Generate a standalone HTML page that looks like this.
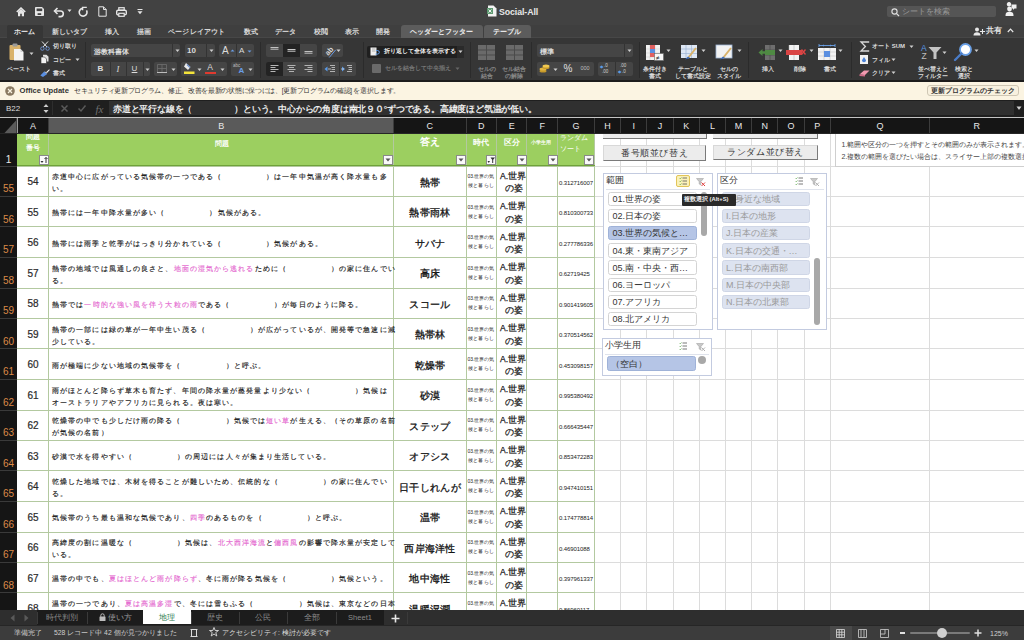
<!DOCTYPE html><html><head><meta charset="utf-8"><style>
@font-face{font-family:"CJB";src:local("Liberation Sans");size-adjust:125%;unicode-range:U+2E80-2FFF,U+3001-33FF,U+3400-9FFF,U+F900-FAFF,U+FF01-FFEF}
@font-face{font-family:"CJB";font-weight:bold;src:local("Liberation Sans Bold"),local("LiberationSans-Bold");size-adjust:125%;unicode-range:U+2E80-2FFF,U+3001-33FF,U+3400-9FFF,U+F900-FAFF,U+FF01-FFEF}
*{margin:0;padding:0;box-sizing:border-box}
html,body{width:1024px;height:640px;overflow:hidden;background:#2c2c2c;font-family:"CJB","Liberation Sans",sans-serif}
div{position:absolute}
.j{text-align:justify;text-align-last:justify}
.bl{display:inline-block;height:1px}
.t{white-space:nowrap;transform:translateY(-50%);line-height:1}
.tc{white-space:nowrap;transform:translate(-50%,-50%);line-height:1}
.tr{white-space:nowrap;transform:translate(-100%,-50%);line-height:1}
svg{position:absolute;overflow:visible}
.cj{font-family:"CJB","Liberation Sans",sans-serif}
</style></head><body><div style="left:0px;top:134px;width:1024px;height:476px;background:#ffffff"></div>
<div style="left:620px;top:134px;width:1px;height:476px;background:#dcdcdc"></div>
<div style="left:646px;top:134px;width:1px;height:476px;background:#dcdcdc"></div>
<div style="left:673px;top:134px;width:1px;height:476px;background:#dcdcdc"></div>
<div style="left:699px;top:134px;width:1px;height:476px;background:#dcdcdc"></div>
<div style="left:725px;top:134px;width:1px;height:476px;background:#dcdcdc"></div>
<div style="left:751px;top:134px;width:1px;height:476px;background:#dcdcdc"></div>
<div style="left:777px;top:134px;width:1px;height:476px;background:#dcdcdc"></div>
<div style="left:804px;top:134px;width:1px;height:476px;background:#dcdcdc"></div>
<div style="left:830px;top:134px;width:1px;height:476px;background:#dcdcdc"></div>
<div style="left:929px;top:134px;width:1px;height:476px;background:#dcdcdc"></div>
<div style="left:594px;top:166px;width:430px;height:1px;background:#dcdcdc"></div>
<div style="left:594px;top:196px;width:430px;height:1px;background:#dcdcdc"></div>
<div style="left:594px;top:226px;width:430px;height:1px;background:#dcdcdc"></div>
<div style="left:594px;top:257px;width:430px;height:1px;background:#dcdcdc"></div>
<div style="left:594px;top:288px;width:430px;height:1px;background:#dcdcdc"></div>
<div style="left:594px;top:318px;width:430px;height:1px;background:#dcdcdc"></div>
<div style="left:594px;top:348px;width:430px;height:1px;background:#dcdcdc"></div>
<div style="left:594px;top:379px;width:430px;height:1px;background:#dcdcdc"></div>
<div style="left:594px;top:410px;width:430px;height:1px;background:#dcdcdc"></div>
<div style="left:594px;top:440px;width:430px;height:1px;background:#dcdcdc"></div>
<div style="left:594px;top:470px;width:430px;height:1px;background:#dcdcdc"></div>
<div style="left:594px;top:501px;width:430px;height:1px;background:#dcdcdc"></div>
<div style="left:594px;top:532px;width:430px;height:1px;background:#dcdcdc"></div>
<div style="left:594px;top:562px;width:430px;height:1px;background:#dcdcdc"></div>
<div style="left:594px;top:592px;width:430px;height:1px;background:#dcdcdc"></div>
<div style="left:17px;top:134px;width:577.5px;height:32px;background:#9ccf60"></div>
<div style="left:48px;top:134px;width:1px;height:476px;background:#b3c9a0"></div>
<div style="left:393px;top:134px;width:1px;height:476px;background:#b3c9a0"></div>
<div style="left:466px;top:134px;width:1px;height:476px;background:#b3c9a0"></div>
<div style="left:496px;top:134px;width:1px;height:476px;background:#b3c9a0"></div>
<div style="left:526px;top:134px;width:1px;height:476px;background:#b3c9a0"></div>
<div style="left:557px;top:134px;width:1px;height:476px;background:#b3c9a0"></div>
<div style="left:594px;top:134px;width:1px;height:476px;background:#b3c9a0"></div>
<div style="left:17px;top:166px;width:577.5px;height:1px;background:#b3c9a0"></div>
<div style="left:17px;top:196px;width:577.5px;height:1px;background:#b3c9a0"></div>
<div style="left:17px;top:226px;width:577.5px;height:1px;background:#b3c9a0"></div>
<div style="left:17px;top:257px;width:577.5px;height:1px;background:#b3c9a0"></div>
<div style="left:17px;top:288px;width:577.5px;height:1px;background:#b3c9a0"></div>
<div style="left:17px;top:318px;width:577.5px;height:1px;background:#b3c9a0"></div>
<div style="left:17px;top:348px;width:577.5px;height:1px;background:#b3c9a0"></div>
<div style="left:17px;top:379px;width:577.5px;height:1px;background:#b3c9a0"></div>
<div style="left:17px;top:410px;width:577.5px;height:1px;background:#b3c9a0"></div>
<div style="left:17px;top:440px;width:577.5px;height:1px;background:#b3c9a0"></div>
<div style="left:17px;top:470px;width:577.5px;height:1px;background:#b3c9a0"></div>
<div style="left:17px;top:501px;width:577.5px;height:1px;background:#b3c9a0"></div>
<div style="left:17px;top:532px;width:577.5px;height:1px;background:#b3c9a0"></div>
<div style="left:17px;top:562px;width:577.5px;height:1px;background:#b3c9a0"></div>
<div style="left:17px;top:592px;width:577.5px;height:1px;background:#b3c9a0"></div>
<div style="left:17px;top:165px;width:577.5px;height:1px;background:#6fa23a"></div>
<div style="left:0px;top:134px;width:17px;height:476px;background:#151515"></div>
<div style="left:0px;top:166px;width:17px;height:1px;background:#3a3a3a"></div>
<div style="left:0px;top:196px;width:17px;height:1px;background:#3a3a3a"></div>
<div style="left:0px;top:226px;width:17px;height:1px;background:#3a3a3a"></div>
<div style="left:0px;top:257px;width:17px;height:1px;background:#3a3a3a"></div>
<div style="left:0px;top:288px;width:17px;height:1px;background:#3a3a3a"></div>
<div style="left:0px;top:318px;width:17px;height:1px;background:#3a3a3a"></div>
<div style="left:0px;top:348px;width:17px;height:1px;background:#3a3a3a"></div>
<div style="left:0px;top:379px;width:17px;height:1px;background:#3a3a3a"></div>
<div style="left:0px;top:410px;width:17px;height:1px;background:#3a3a3a"></div>
<div style="left:0px;top:440px;width:17px;height:1px;background:#3a3a3a"></div>
<div style="left:0px;top:470px;width:17px;height:1px;background:#3a3a3a"></div>
<div style="left:0px;top:501px;width:17px;height:1px;background:#3a3a3a"></div>
<div style="left:0px;top:532px;width:17px;height:1px;background:#3a3a3a"></div>
<div style="left:0px;top:562px;width:17px;height:1px;background:#3a3a3a"></div>
<div style="left:0px;top:592px;width:17px;height:1px;background:#3a3a3a"></div>
<div class="tc" style="left:8.5px;top:159.5px;color:#e8e8e8;font-size:10px">1</div>
<div class="tc" style="left:8.5px;top:189.0px;color:#dc8a48;font-size:10px">55</div>
<div class="tc" style="left:8.5px;top:219.5px;color:#dc8a48;font-size:10px">56</div>
<div class="tc" style="left:8.5px;top:250.0px;color:#dc8a48;font-size:10px">57</div>
<div class="tc" style="left:8.5px;top:280.5px;color:#dc8a48;font-size:10px">58</div>
<div class="tc" style="left:8.5px;top:311.0px;color:#dc8a48;font-size:10px">59</div>
<div class="tc" style="left:8.5px;top:341.5px;color:#dc8a48;font-size:10px">60</div>
<div class="tc" style="left:8.5px;top:372.0px;color:#dc8a48;font-size:10px">61</div>
<div class="tc" style="left:8.5px;top:402.5px;color:#dc8a48;font-size:10px">62</div>
<div class="tc" style="left:8.5px;top:433.0px;color:#dc8a48;font-size:10px">63</div>
<div class="tc" style="left:8.5px;top:463.5px;color:#dc8a48;font-size:10px">64</div>
<div class="tc" style="left:8.5px;top:494.0px;color:#dc8a48;font-size:10px">65</div>
<div class="tc" style="left:8.5px;top:524.5px;color:#dc8a48;font-size:10px">66</div>
<div class="tc" style="left:8.5px;top:555.0px;color:#dc8a48;font-size:10px">67</div>
<div class="tc" style="left:8.5px;top:585.5px;color:#dc8a48;font-size:10px">68</div>
<div class="tc" style="left:33px;top:182.25px;color:#2a2a2a;font-size:10px;-webkit-text-stroke-width:0.2px">54</div>
<div class="t cj j" style="left:52px;top:177.25px;width:335.61px;color:#1a1a1a;font-size:7.2px;letter-spacing:1.1px;-webkit-text-stroke-width:0.15px">赤道中心に広がっている気候帯の一つである（<b class="bl" style="width:44px"></b>）は一年中気温が高く降水量も多</div>
<div class="t cj j" style="left:52px;top:189.25px;width:16.20px;color:#1a1a1a;font-size:7.2px;letter-spacing:1.1px;-webkit-text-stroke-width:0.15px">い。</div>
<div class="tc cj j" style="left:430px;top:182.75px;width:20.61px;color:#111;font-size:9.5px;letter-spacing:0.3px;-webkit-text-stroke-width:0.3px">熱帯</div>
<div class="t j" style="left:467.5px;top:176.45px;width:26.95px;color:#222;font-size:5px">03.世界の気</div>
<div class="t j" style="left:467.5px;top:185.45px;width:27.00px;color:#222;font-size:5px;letter-spacing:0.4px">候と暮らし</div>
<div class="t j" style="left:500px;top:175.75px;width:26.12px;color:#1a1a1a;font-size:8.6px;-webkit-text-stroke-width:0.25px">A.世界</div>
<div class="t j" style="left:504.5px;top:188.25px;width:18.00px;color:#1a1a1a;font-size:8.6px;-webkit-text-stroke-width:0.25px">の姿</div>
<div class="t" style="left:559px;top:182.75px;color:#222;font-size:6px;letter-spacing:-0.1px">0.312716007</div>
<div class="tc" style="left:33px;top:212.75px;color:#2a2a2a;font-size:10px;-webkit-text-stroke-width:0.2px">55</div>
<div class="t cj j" style="left:52px;top:213.25px;width:214.11px;color:#1a1a1a;font-size:7.2px;letter-spacing:1.1px;-webkit-text-stroke-width:0.15px">熱帯には一年中降水量が多い（<b class="bl" style="width:44px"></b>）気候がある。</div>
<div class="tc cj j" style="left:430px;top:213.25px;width:41.20px;color:#111;font-size:9.5px;letter-spacing:0.3px;-webkit-text-stroke-width:0.3px">熱帯雨林</div>
<div class="t j" style="left:467.5px;top:206.95px;width:26.95px;color:#222;font-size:5px">03.世界の気</div>
<div class="t j" style="left:467.5px;top:215.95px;width:27.00px;color:#222;font-size:5px;letter-spacing:0.4px">候と暮らし</div>
<div class="t j" style="left:500px;top:206.25px;width:26.12px;color:#1a1a1a;font-size:8.6px;-webkit-text-stroke-width:0.25px">A.世界</div>
<div class="t j" style="left:504.5px;top:218.75px;width:18.00px;color:#1a1a1a;font-size:8.6px;-webkit-text-stroke-width:0.25px">の姿</div>
<div class="t" style="left:559px;top:213.25px;color:#222;font-size:6px;letter-spacing:-0.1px">0.810300733</div>
<div class="tc" style="left:33px;top:243.25px;color:#2a2a2a;font-size:10px;-webkit-text-stroke-width:0.2px">56</div>
<div class="t cj j" style="left:52px;top:243.75px;width:270.81px;color:#1a1a1a;font-size:7.2px;letter-spacing:1.1px;-webkit-text-stroke-width:0.15px">熱帯には雨季と乾季がはっきり分かれている（<b class="bl" style="width:44px"></b>）気候がある。</div>
<div class="tc cj j" style="left:430px;top:243.75px;width:30.91px;color:#111;font-size:9.5px;letter-spacing:0.3px;-webkit-text-stroke-width:0.3px">サバナ</div>
<div class="t j" style="left:467.5px;top:237.45px;width:26.95px;color:#222;font-size:5px">03.世界の気</div>
<div class="t j" style="left:467.5px;top:246.45px;width:27.00px;color:#222;font-size:5px;letter-spacing:0.4px">候と暮らし</div>
<div class="t j" style="left:500px;top:236.75px;width:26.12px;color:#1a1a1a;font-size:8.6px;-webkit-text-stroke-width:0.25px">A.世界</div>
<div class="t j" style="left:504.5px;top:249.25px;width:18.00px;color:#1a1a1a;font-size:8.6px;-webkit-text-stroke-width:0.25px">の姿</div>
<div class="t" style="left:559px;top:243.75px;color:#222;font-size:6px;letter-spacing:-0.1px">0.277786336</div>
<div class="tc" style="left:33px;top:273.75px;color:#2a2a2a;font-size:10px;-webkit-text-stroke-width:0.2px">57</div>
<div class="t cj j" style="left:52px;top:268.75px;width:343.72px;color:#1a1a1a;font-size:7.2px;letter-spacing:1.1px;-webkit-text-stroke-width:0.15px">熱帯の地域では風通しの良さと、<span style="color:#e56bd0">地面の湿気から逃れる</span>ために（<b class="bl" style="width:44px"></b>）の家に住んでい</div>
<div class="t cj j" style="left:52px;top:280.75px;width:16.20px;color:#1a1a1a;font-size:7.2px;letter-spacing:1.1px;-webkit-text-stroke-width:0.15px">る。</div>
<div class="tc cj j" style="left:430px;top:274.25px;width:20.61px;color:#111;font-size:9.5px;letter-spacing:0.3px;-webkit-text-stroke-width:0.3px">高床</div>
<div class="t j" style="left:467.5px;top:267.95px;width:26.95px;color:#222;font-size:5px">03.世界の気</div>
<div class="t j" style="left:467.5px;top:276.95px;width:27.00px;color:#222;font-size:5px;letter-spacing:0.4px">候と暮らし</div>
<div class="t j" style="left:500px;top:267.25px;width:26.12px;color:#1a1a1a;font-size:8.6px;-webkit-text-stroke-width:0.25px">A.世界</div>
<div class="t j" style="left:504.5px;top:279.75px;width:18.00px;color:#1a1a1a;font-size:8.6px;-webkit-text-stroke-width:0.25px">の姿</div>
<div class="t" style="left:559px;top:274.25px;color:#222;font-size:6px;letter-spacing:-0.1px">0.62719425</div>
<div class="tc" style="left:33px;top:304.25px;color:#2a2a2a;font-size:10px;-webkit-text-stroke-width:0.2px">58</div>
<div class="t cj j" style="left:52px;top:304.75px;width:311.33px;color:#1a1a1a;font-size:7.2px;letter-spacing:1.1px;-webkit-text-stroke-width:0.15px">熱帯では<span style="color:#e56bd0">一時的な強い風を伴う大粒の雨</span>である（<b class="bl" style="width:44px"></b>）が毎日のように降る。</div>
<div class="tc cj j" style="left:430px;top:304.75px;width:41.20px;color:#111;font-size:9.5px;letter-spacing:0.3px;-webkit-text-stroke-width:0.3px">スコール</div>
<div class="t j" style="left:467.5px;top:298.45px;width:26.95px;color:#222;font-size:5px">03.世界の気</div>
<div class="t j" style="left:467.5px;top:307.45px;width:27.00px;color:#222;font-size:5px;letter-spacing:0.4px">候と暮らし</div>
<div class="t j" style="left:500px;top:297.75px;width:26.12px;color:#1a1a1a;font-size:8.6px;-webkit-text-stroke-width:0.25px">A.世界</div>
<div class="t j" style="left:504.5px;top:310.25px;width:18.00px;color:#1a1a1a;font-size:8.6px;-webkit-text-stroke-width:0.25px">の姿</div>
<div class="t" style="left:559px;top:304.75px;color:#222;font-size:6px;letter-spacing:-0.1px">0.901419605</div>
<div class="tc" style="left:33px;top:334.75px;color:#2a2a2a;font-size:10px;-webkit-text-stroke-width:0.2px">59</div>
<div class="t cj j" style="left:52px;top:329.75px;width:343.72px;color:#1a1a1a;font-size:7.2px;letter-spacing:1.1px;-webkit-text-stroke-width:0.15px">熱帯の一部には緑の草が一年中生い茂る（<b class="bl" style="width:44px"></b>）が広がっているが、開発等で急速に減</div>
<div class="t cj j" style="left:52px;top:341.75px;width:48.61px;color:#1a1a1a;font-size:7.2px;letter-spacing:1.1px;-webkit-text-stroke-width:0.15px">少している。</div>
<div class="tc cj j" style="left:430px;top:335.25px;width:30.91px;color:#111;font-size:9.5px;letter-spacing:0.3px;-webkit-text-stroke-width:0.3px">熱帯林</div>
<div class="t j" style="left:467.5px;top:328.95px;width:26.95px;color:#222;font-size:5px">03.世界の気</div>
<div class="t j" style="left:467.5px;top:337.95px;width:27.00px;color:#222;font-size:5px;letter-spacing:0.4px">候と暮らし</div>
<div class="t j" style="left:500px;top:328.25px;width:26.12px;color:#1a1a1a;font-size:8.6px;-webkit-text-stroke-width:0.25px">A.世界</div>
<div class="t j" style="left:504.5px;top:340.75px;width:18.00px;color:#1a1a1a;font-size:8.6px;-webkit-text-stroke-width:0.25px">の姿</div>
<div class="t" style="left:559px;top:335.25px;color:#222;font-size:6px;letter-spacing:-0.1px">0.370514562</div>
<div class="tc" style="left:33px;top:365.25px;color:#2a2a2a;font-size:10px;-webkit-text-stroke-width:0.2px">60</div>
<div class="t cj j" style="left:52px;top:365.75px;width:214.11px;color:#1a1a1a;font-size:7.2px;letter-spacing:1.1px;-webkit-text-stroke-width:0.15px">雨が極端に少ない地域の気候帯を（<b class="bl" style="width:44px"></b>）と呼ぶ。</div>
<div class="tc cj j" style="left:430px;top:365.75px;width:30.91px;color:#111;font-size:9.5px;letter-spacing:0.3px;-webkit-text-stroke-width:0.3px">乾燥帯</div>
<div class="t j" style="left:467.5px;top:359.45px;width:26.95px;color:#222;font-size:5px">03.世界の気</div>
<div class="t j" style="left:467.5px;top:368.45px;width:27.00px;color:#222;font-size:5px;letter-spacing:0.4px">候と暮らし</div>
<div class="t j" style="left:500px;top:358.75px;width:26.12px;color:#1a1a1a;font-size:8.6px;-webkit-text-stroke-width:0.25px">A.世界</div>
<div class="t j" style="left:504.5px;top:371.25px;width:18.00px;color:#1a1a1a;font-size:8.6px;-webkit-text-stroke-width:0.25px">の姿</div>
<div class="t" style="left:559px;top:365.75px;color:#222;font-size:6px;letter-spacing:-0.1px">0.453098157</div>
<div class="tc" style="left:33px;top:395.75px;color:#2a2a2a;font-size:10px;-webkit-text-stroke-width:0.2px">61</div>
<div class="t cj j" style="left:52px;top:390.75px;width:335.61px;color:#1a1a1a;font-size:7.2px;letter-spacing:1.1px;-webkit-text-stroke-width:0.15px">雨がほとんど降らず草木も育たず、年間の降水量が蒸発量より少ない（<b class="bl" style="width:44px"></b>）気候は</div>
<div class="t cj j" style="left:52px;top:402.75px;width:186.31px;color:#1a1a1a;font-size:7.2px;letter-spacing:1.1px;-webkit-text-stroke-width:0.15px">オーストラリアやアフリカに見られる。夜は寒い。</div>
<div class="tc cj j" style="left:430px;top:396.25px;width:20.61px;color:#111;font-size:9.5px;letter-spacing:0.3px;-webkit-text-stroke-width:0.3px">砂漠</div>
<div class="t j" style="left:467.5px;top:389.95px;width:26.95px;color:#222;font-size:5px">03.世界の気</div>
<div class="t j" style="left:467.5px;top:398.95px;width:27.00px;color:#222;font-size:5px;letter-spacing:0.4px">候と暮らし</div>
<div class="t j" style="left:500px;top:389.25px;width:26.12px;color:#1a1a1a;font-size:8.6px;-webkit-text-stroke-width:0.25px">A.世界</div>
<div class="t j" style="left:504.5px;top:401.75px;width:18.00px;color:#1a1a1a;font-size:8.6px;-webkit-text-stroke-width:0.25px">の姿</div>
<div class="t" style="left:559px;top:396.25px;color:#222;font-size:6px;letter-spacing:-0.1px">0.995380492</div>
<div class="tc" style="left:33px;top:426.25px;color:#2a2a2a;font-size:10px;-webkit-text-stroke-width:0.2px">62</div>
<div class="t cj j" style="left:52px;top:421.25px;width:343.73px;color:#1a1a1a;font-size:7.2px;letter-spacing:1.1px;-webkit-text-stroke-width:0.15px">乾燥帯の中でも少しだけ雨の降る（<b class="bl" style="width:44px"></b>）気候では<span style="color:#e56bd0">短い草</span>が生える、（その草原の名前</div>
<div class="t cj j" style="left:52px;top:433.25px;width:56.70px;color:#1a1a1a;font-size:7.2px;letter-spacing:1.1px;-webkit-text-stroke-width:0.15px">が気候の名前）</div>
<div class="tc cj j" style="left:430px;top:426.75px;width:41.20px;color:#111;font-size:9.5px;letter-spacing:0.3px;-webkit-text-stroke-width:0.3px">ステップ</div>
<div class="t j" style="left:467.5px;top:420.45px;width:26.95px;color:#222;font-size:5px">03.世界の気</div>
<div class="t j" style="left:467.5px;top:429.45px;width:27.00px;color:#222;font-size:5px;letter-spacing:0.4px">候と暮らし</div>
<div class="t j" style="left:500px;top:419.75px;width:26.12px;color:#1a1a1a;font-size:8.6px;-webkit-text-stroke-width:0.25px">A.世界</div>
<div class="t j" style="left:504.5px;top:432.25px;width:18.00px;color:#1a1a1a;font-size:8.6px;-webkit-text-stroke-width:0.25px">の姿</div>
<div class="t" style="left:559px;top:426.75px;color:#222;font-size:6px;letter-spacing:-0.1px">0.666435447</div>
<div class="tc" style="left:33px;top:456.75px;color:#2a2a2a;font-size:10px;-webkit-text-stroke-width:0.2px">63</div>
<div class="t cj j" style="left:52px;top:457.25px;width:278.91px;color:#1a1a1a;font-size:7.2px;letter-spacing:1.1px;-webkit-text-stroke-width:0.15px">砂漠で水を得やすい（<b class="bl" style="width:44px"></b>）の周辺には人々が集まり生活している。</div>
<div class="tc cj j" style="left:430px;top:457.25px;width:41.20px;color:#111;font-size:9.5px;letter-spacing:0.3px;-webkit-text-stroke-width:0.3px">オアシス</div>
<div class="t j" style="left:467.5px;top:450.95px;width:26.95px;color:#222;font-size:5px">03.世界の気</div>
<div class="t j" style="left:467.5px;top:459.95px;width:27.00px;color:#222;font-size:5px;letter-spacing:0.4px">候と暮らし</div>
<div class="t j" style="left:500px;top:450.25px;width:26.12px;color:#1a1a1a;font-size:8.6px;-webkit-text-stroke-width:0.25px">A.世界</div>
<div class="t j" style="left:504.5px;top:462.75px;width:18.00px;color:#1a1a1a;font-size:8.6px;-webkit-text-stroke-width:0.25px">の姿</div>
<div class="t" style="left:559px;top:457.25px;color:#222;font-size:6px;letter-spacing:-0.1px">0.853472283</div>
<div class="tc" style="left:33px;top:487.25px;color:#2a2a2a;font-size:10px;-webkit-text-stroke-width:0.2px">64</div>
<div class="t cj j" style="left:52px;top:482.25px;width:335.62px;color:#1a1a1a;font-size:7.2px;letter-spacing:1.1px;-webkit-text-stroke-width:0.15px">乾燥した地域では、木材を得ることが難しいため、伝統的な（<b class="bl" style="width:44px"></b>）の家に住んでい</div>
<div class="t cj j" style="left:52px;top:494.25px;width:16.20px;color:#1a1a1a;font-size:7.2px;letter-spacing:1.1px;-webkit-text-stroke-width:0.15px">る。</div>
<div class="tc cj j" style="left:430px;top:487.75px;width:61.81px;color:#111;font-size:9.5px;letter-spacing:0.3px;-webkit-text-stroke-width:0.3px">日干しれんが</div>
<div class="t j" style="left:467.5px;top:481.45px;width:26.95px;color:#222;font-size:5px">03.世界の気</div>
<div class="t j" style="left:467.5px;top:490.45px;width:27.00px;color:#222;font-size:5px;letter-spacing:0.4px">候と暮らし</div>
<div class="t j" style="left:500px;top:480.75px;width:26.12px;color:#1a1a1a;font-size:8.6px;-webkit-text-stroke-width:0.25px">A.世界</div>
<div class="t j" style="left:504.5px;top:493.25px;width:18.00px;color:#1a1a1a;font-size:8.6px;-webkit-text-stroke-width:0.25px">の姿</div>
<div class="t" style="left:559px;top:487.75px;color:#222;font-size:6px;letter-spacing:-0.1px">0.947410151</div>
<div class="tc" style="left:33px;top:517.75px;color:#2a2a2a;font-size:10px;-webkit-text-stroke-width:0.2px">65</div>
<div class="t cj j" style="left:52px;top:518.25px;width:295.11px;color:#1a1a1a;font-size:7.2px;letter-spacing:1.1px;-webkit-text-stroke-width:0.15px">気候帯のうち最も温和な気候であり、<span style="color:#e56bd0">四季</span>のあるものを（<b class="bl" style="width:44px"></b>）と呼ぶ。</div>
<div class="tc cj j" style="left:430px;top:518.25px;width:20.61px;color:#111;font-size:9.5px;letter-spacing:0.3px;-webkit-text-stroke-width:0.3px">温帯</div>
<div class="t j" style="left:467.5px;top:511.95px;width:26.95px;color:#222;font-size:5px">03.世界の気</div>
<div class="t j" style="left:467.5px;top:520.95px;width:27.00px;color:#222;font-size:5px;letter-spacing:0.4px">候と暮らし</div>
<div class="t j" style="left:500px;top:511.25px;width:26.12px;color:#1a1a1a;font-size:8.6px;-webkit-text-stroke-width:0.25px">A.世界</div>
<div class="t j" style="left:504.5px;top:523.75px;width:18.00px;color:#1a1a1a;font-size:8.6px;-webkit-text-stroke-width:0.25px">の姿</div>
<div class="t" style="left:559px;top:518.25px;color:#222;font-size:6px;letter-spacing:-0.1px">0.174778814</div>
<div class="tc" style="left:33px;top:548.25px;color:#2a2a2a;font-size:10px;-webkit-text-stroke-width:0.2px">66</div>
<div class="t cj j" style="left:52px;top:543.25px;width:343.73px;color:#1a1a1a;font-size:7.2px;letter-spacing:1.1px;-webkit-text-stroke-width:0.15px">高緯度の割に温暖な（<b class="bl" style="width:44px"></b>）気候は、<span style="color:#e56bd0">北大西洋海流</span>と<span style="color:#e56bd0">偏西風</span>の影響で降水量が安定して</div>
<div class="t cj j" style="left:52px;top:555.25px;width:24.31px;color:#1a1a1a;font-size:7.2px;letter-spacing:1.1px;-webkit-text-stroke-width:0.15px">いる。</div>
<div class="tc cj j" style="left:430px;top:548.75px;width:51.50px;color:#111;font-size:9.5px;letter-spacing:0.3px;-webkit-text-stroke-width:0.3px">西岸海洋性</div>
<div class="t j" style="left:467.5px;top:542.45px;width:26.95px;color:#222;font-size:5px">03.世界の気</div>
<div class="t j" style="left:467.5px;top:551.45px;width:27.00px;color:#222;font-size:5px;letter-spacing:0.4px">候と暮らし</div>
<div class="t j" style="left:500px;top:541.75px;width:26.12px;color:#1a1a1a;font-size:8.6px;-webkit-text-stroke-width:0.25px">A.世界</div>
<div class="t j" style="left:504.5px;top:554.25px;width:18.00px;color:#1a1a1a;font-size:8.6px;-webkit-text-stroke-width:0.25px">の姿</div>
<div class="t" style="left:559px;top:548.75px;color:#222;font-size:6px;letter-spacing:-0.1px">0.46901088</div>
<div class="tc" style="left:33px;top:578.75px;color:#2a2a2a;font-size:10px;-webkit-text-stroke-width:0.2px">67</div>
<div class="t cj j" style="left:52px;top:579.25px;width:335.62px;color:#1a1a1a;font-size:7.2px;letter-spacing:1.1px;-webkit-text-stroke-width:0.15px">温帯の中でも、<span style="color:#e56bd0">夏はほとんど雨が降らず</span>、冬に雨が降る気候を（<b class="bl" style="width:44px"></b>）気候という。</div>
<div class="tc cj j" style="left:430px;top:579.25px;width:41.20px;color:#111;font-size:9.5px;letter-spacing:0.3px;-webkit-text-stroke-width:0.3px">地中海性</div>
<div class="t j" style="left:467.5px;top:572.95px;width:26.95px;color:#222;font-size:5px">03.世界の気</div>
<div class="t j" style="left:467.5px;top:581.95px;width:27.00px;color:#222;font-size:5px;letter-spacing:0.4px">候と暮らし</div>
<div class="t j" style="left:500px;top:572.25px;width:26.12px;color:#1a1a1a;font-size:8.6px;-webkit-text-stroke-width:0.25px">A.世界</div>
<div class="t j" style="left:504.5px;top:584.75px;width:18.00px;color:#1a1a1a;font-size:8.6px;-webkit-text-stroke-width:0.25px">の姿</div>
<div class="t" style="left:559px;top:579.25px;color:#222;font-size:6px;letter-spacing:-0.1px">0.397961337</div>
<div class="tc" style="left:33px;top:609.25px;color:#2a2a2a;font-size:10px;-webkit-text-stroke-width:0.2px">68</div>
<div class="t cj j" style="left:52px;top:604.25px;width:343.72px;color:#1a1a1a;font-size:7.2px;letter-spacing:1.1px;-webkit-text-stroke-width:0.15px">温帯の一つであり、<span style="color:#e56bd0">夏は高温多湿</span>で、冬には雪もふる（<b class="bl" style="width:44px"></b>）気候は、東京などの日本</div>
<div class="t cj" style="left:52px;top:616.25px;color:#1a1a1a;font-size:7.2px;letter-spacing:1.1px;-webkit-text-stroke-width:0.15px"></div>
<div class="tc cj j" style="left:430px;top:609.75px;width:41.20px;color:#111;font-size:9.5px;letter-spacing:0.3px;-webkit-text-stroke-width:0.3px">温暖湿潤</div>
<div class="t j" style="left:467.5px;top:603.45px;width:26.95px;color:#222;font-size:5px">03.世界の気</div>
<div class="t j" style="left:467.5px;top:612.45px;width:27.00px;color:#222;font-size:5px;letter-spacing:0.4px">候と暮らし</div>
<div class="t j" style="left:500px;top:602.75px;width:26.12px;color:#1a1a1a;font-size:8.6px;-webkit-text-stroke-width:0.25px">A.世界</div>
<div class="t j" style="left:504.5px;top:615.25px;width:18.00px;color:#1a1a1a;font-size:8.6px;-webkit-text-stroke-width:0.25px">の姿</div>
<div class="t" style="left:559px;top:609.75px;color:#222;font-size:6px;letter-spacing:-0.1px">0.86960117</div>
<div class="tc j" style="left:33px;top:137px;width:14.00px;color:#fff;font-size:6.5px;font-weight:bold">問題</div>
<div class="tc j" style="left:33px;top:148px;width:14.00px;color:#fff;font-size:6.5px;font-weight:bold">番号</div>
<div class="tc j" style="left:222px;top:143px;width:14.00px;color:#fff;font-size:7px;font-weight:bold">問題</div>
<div class="tc cj j" style="left:430px;top:142px;width:20.00px;color:#fff;font-size:10px;font-weight:bold">答え</div>
<div class="tc j" style="left:481px;top:143px;width:16.00px;color:#fff;font-size:7.5px;font-weight:bold">時代</div>
<div class="tc j" style="left:512px;top:143px;width:16.00px;color:#fff;font-size:7.5px;font-weight:bold">区分</div>
<div class="tc j" style="left:541px;top:143px;width:20.00px;color:#fff;font-size:4.5px;font-weight:bold">小学生用</div>
<div class="t j" style="left:560px;top:137px;width:28.00px;color:#fff;font-size:7px">ランダム</div>
<div class="t j" style="left:560px;top:148px;width:21.00px;color:#fff;font-size:7px">ソート</div>
<div style="left:39px;top:155px;width:10px;height:10px;background:#fafafa;border:1px solid #8a8a8a"></div>
<svg style="left:39px;top:155px" width="10" height="10"><path d="M1.5 6h3l-1.5 2z" fill="#333"/><path d="M7 8V2.5M5.5 4l1.5-1.5 1.5 1.5" stroke="#333" stroke-width="1" fill="none"/></svg>
<div style="left:383px;top:155px;width:10px;height:10px;background:#fafafa;border:1px solid #8a8a8a"></div>
<svg style="left:383px;top:155px" width="10" height="10"><path d="M2.5 3.5h5l-2.5 3z" fill="#555"/></svg>
<div style="left:455.5px;top:155px;width:10px;height:10px;background:#fafafa;border:1px solid #8a8a8a"></div>
<svg style="left:455.5px;top:155px" width="10" height="10"><path d="M2.5 3.5h5l-2.5 3z" fill="#555"/></svg>
<div style="left:486px;top:155px;width:10px;height:10px;background:#fafafa;border:1px solid #8a8a8a"></div>
<svg style="left:486px;top:155px" width="10" height="10"><path d="M1.5 6h2.5l-1.25 2z" fill="#333"/><path d="M4.5 2.5h4.5l-1.8 2.2v3.3h-1v-3.3z" fill="#333"/></svg>
<div style="left:516.5px;top:155px;width:10px;height:10px;background:#fafafa;border:1px solid #8a8a8a"></div>
<svg style="left:516.5px;top:155px" width="10" height="10"><path d="M2.5 3.5h5l-2.5 3z" fill="#555"/></svg>
<div style="left:547.5px;top:155px;width:10px;height:10px;background:#fafafa;border:1px solid #8a8a8a"></div>
<svg style="left:547.5px;top:155px" width="10" height="10"><path d="M2.5 3.5h5l-2.5 3z" fill="#555"/></svg>
<div style="left:584px;top:155px;width:10px;height:10px;background:#fafafa;border:1px solid #8a8a8a"></div>
<svg style="left:584px;top:155px" width="10" height="10"><path d="M2.5 3.5h5l-2.5 3z" fill="#555"/></svg>
<div style="left:603px;top:130px;width:103.5px;height:8.5px;background:#ececec;border-right:1.5px solid #7a7a7a;border-bottom:1.5px solid #7a7a7a"></div>
<div style="left:713px;top:130px;width:105px;height:8.5px;background:#ececec;border-right:1.5px solid #7a7a7a;border-bottom:1.5px solid #7a7a7a"></div>
<div style="left:603px;top:145px;width:103px;height:15.5px;background:#ececec;border-right:1.5px solid #7a7a7a;border-bottom:1.5px solid #7a7a7a;border-top:1px solid #d8d8d8;border-left:1px solid #d8d8d8"></div>
<div class="tc j" style="left:654.5px;top:152.5px;width:67.20px;color:#333;font-size:9px;letter-spacing:0.6px">番号順並び替え</div>
<div style="left:713px;top:144.5px;width:105px;height:15px;background:#ececec;border-right:1.5px solid #7a7a7a;border-bottom:1.5px solid #7a7a7a;border-top:1px solid #d8d8d8;border-left:1px solid #d8d8d8"></div>
<div class="tc j" style="left:765.5px;top:152px;width:76.81px;color:#333;font-size:9px;letter-spacing:0.6px">ランダム並び替え</div>
<div style="left:834.5px;top:134px;width:200px;height:32.5px;background:#ffffff;border-left:1px solid #cfcfcf;border-bottom:1px solid #cfcfcf"></div>
<div class="t j" style="left:841.5px;top:144px;width:187.84px;color:#444;font-size:7px;letter-spacing:0px">1.範囲や区分の一つを押すとその範囲のみが表示されます。</div>
<div class="t j" style="left:841.5px;top:156px;width:187.84px;color:#444;font-size:7px;letter-spacing:0px">2.複数の範囲を選びたい場合は、スライサー上部の複数選択</div>
<div style="left:602.5px;top:172.5px;width:110px;height:157px;background:#ffffff;border:1px solid #c3cbe0"></div>
<div class="t j" style="left:606.0px;top:179.8px;width:18.00px;color:#333;font-size:9px">範囲</div>
<div style="left:605.5px;top:189.0px;width:104px;height:1px;background:#dfe3ec"></div>
<div style="left:676px;top:174.5px;width:13.5px;height:12.5px;background:#fbf1b8;border:1px solid #e2c55a;border-radius:2px"></div>
<svg style="left:679px;top:177.0px" width="8" height="8" viewBox="0 0 8 8"><path d="M0.5 1l0.8 0.8 1.2-1.3M0.5 4l0.8 0.8 1.2-1.3M0.5 7l0.8 0.8 1.2-1.3" stroke="#5aa84a" stroke-width="0.7" fill="none"/><path d="M3.5 1h4.5M3.5 4h4.5M3.5 7h4.5" stroke="#555" stroke-width="0.8"/></svg>
<svg style="left:696px;top:177px" width="10" height="10" viewBox="0 0 10 10"><path d="M0.5 1.5h7l-2.7 3.2v3.3l-1.6-1V4.7z" fill="#c8c8c8" stroke="#999" stroke-width="0.5"/><path d="M5.5 5.5l3.5 3.5M9 5.5l-3.5 3.5" stroke="#e04040" stroke-width="1"/></svg>
<div style="left:608px;top:191.5px;width:88.5px;height:14.5px;background:#ffffff;border:1px solid #d4d4d4;border-radius:2.5px"></div>
<div class="t j" style="left:612.5px;top:199.0px;width:48.52px;color:#333;font-size:9px">01.世界の姿</div>
<div style="left:608px;top:208.7px;width:88.5px;height:14.5px;background:#ffffff;border:1px solid #d4d4d4;border-radius:2.5px"></div>
<div class="t j" style="left:612.5px;top:216.2px;width:48.52px;color:#333;font-size:9px">02.日本の姿</div>
<div style="left:608px;top:225.9px;width:88.5px;height:14.5px;background:#b5c5e6;border:1px solid #9fb2d8;border-radius:2.5px"></div>
<div class="t j" style="left:612.5px;top:233.4px;width:75.52px;color:#333;font-size:9px">03.世界の気候と…</div>
<div style="left:608px;top:243.1px;width:88.5px;height:14.5px;background:#ffffff;border:1px solid #d4d4d4;border-radius:2.5px"></div>
<div class="t j" style="left:612.5px;top:250.6px;width:75.52px;color:#333;font-size:9px">04.東・東南アジア</div>
<div style="left:608px;top:260.3px;width:88.5px;height:14.5px;background:#ffffff;border:1px solid #d4d4d4;border-radius:2.5px"></div>
<div class="t j" style="left:612.5px;top:267.8px;width:75.52px;color:#333;font-size:9px">05.南・中央・西…</div>
<div style="left:608px;top:277.5px;width:88.5px;height:14.5px;background:#ffffff;border:1px solid #d4d4d4;border-radius:2.5px"></div>
<div class="t j" style="left:612.5px;top:285.0px;width:57.52px;color:#333;font-size:9px">06.ヨーロッパ</div>
<div style="left:608px;top:294.7px;width:88.5px;height:14.5px;background:#ffffff;border:1px solid #d4d4d4;border-radius:2.5px"></div>
<div class="t j" style="left:612.5px;top:302.2px;width:48.52px;color:#333;font-size:9px">07.アフリカ</div>
<div style="left:608px;top:311.9px;width:88.5px;height:14.5px;background:#ffffff;border:1px solid #d4d4d4;border-radius:2.5px"></div>
<div class="t j" style="left:612.5px;top:319.4px;width:57.52px;color:#333;font-size:9px">08.北アメリカ</div>
<div style="left:700.5px;top:191.5px;width:6px;height:44px;background:#a8a8a8;border-radius:3px"></div>
<div style="left:716.5px;top:172.5px;width:110px;height:157px;background:#ffffff;border:1px solid #c3cbe0"></div>
<div class="t j" style="left:720.0px;top:179.8px;width:18.00px;color:#333;font-size:9px">区分</div>
<div style="left:719.5px;top:189.0px;width:104px;height:1px;background:#dfe3ec"></div>
<svg style="left:795px;top:177.0px" width="8" height="8" viewBox="0 0 8 8"><path d="M0.5 1l0.8 0.8 1.2-1.3M0.5 4l0.8 0.8 1.2-1.3M0.5 7l0.8 0.8 1.2-1.3" stroke="#5aa84a" stroke-width="0.7" fill="none"/><path d="M3.5 1h4.5M3.5 4h4.5M3.5 7h4.5" stroke="#555" stroke-width="0.8"/></svg>
<svg style="left:810px;top:177px" width="10" height="10" viewBox="0 0 10 10"><path d="M0.5 1.5h7l-2.7 3.2v3.3l-1.6-1V4.7z" fill="#c8c8c8" stroke="#999" stroke-width="0.5"/><path d="M5.5 5.5l3.5 3.5M9 5.5l-3.5 3.5" stroke="#b0b0b0" stroke-width="1"/></svg>
<div style="left:722px;top:191.5px;width:88px;height:14.5px;background:#dde3f0;border:1px solid #cfd6e6;border-radius:2.5px"></div>
<div class="t j" style="left:726px;top:199.0px;width:54.00px;color:#9a9a9a;font-size:9px">H.身近な地域</div>
<div style="left:722px;top:208.7px;width:88px;height:14.5px;background:#dde3f0;border:1px solid #cfd6e6;border-radius:2.5px"></div>
<div class="t j" style="left:726px;top:216.2px;width:50.02px;color:#9a9a9a;font-size:9px">I.日本の地形</div>
<div style="left:722px;top:225.9px;width:88px;height:14.5px;background:#dde3f0;border:1px solid #cfd6e6;border-radius:2.5px"></div>
<div class="t j" style="left:726px;top:233.4px;width:52.02px;color:#9a9a9a;font-size:9px">J.日本の産業</div>
<div style="left:722px;top:243.1px;width:88px;height:14.5px;background:#dde3f0;border:1px solid #cfd6e6;border-radius:2.5px"></div>
<div class="t j" style="left:726px;top:250.6px;width:71.52px;color:#9a9a9a;font-size:9px">K.日本の交通・…</div>
<div style="left:722px;top:260.3px;width:88px;height:14.5px;background:#dde3f0;border:1px solid #cfd6e6;border-radius:2.5px"></div>
<div class="t j" style="left:726px;top:267.8px;width:61.52px;color:#9a9a9a;font-size:9px">L.日本の南西部</div>
<div style="left:722px;top:277.5px;width:88px;height:14.5px;background:#dde3f0;border:1px solid #cfd6e6;border-radius:2.5px"></div>
<div class="t j" style="left:726px;top:285.0px;width:64.00px;color:#9a9a9a;font-size:9px">M.日本の中央部</div>
<div style="left:722px;top:294.7px;width:88px;height:14.5px;background:#dde3f0;border:1px solid #cfd6e6;border-radius:2.5px"></div>
<div class="t j" style="left:726px;top:302.2px;width:63.00px;color:#9a9a9a;font-size:9px">N.日本の北東部</div>
<div style="left:813.5px;top:258px;width:6.5px;height:66.5px;background:#a8a8a8;border-radius:3px"></div>
<div style="left:681.5px;top:194px;width:54.5px;height:11.5px;background:#2a2a2a;border-radius:1px"></div>
<div class="t j" style="left:684px;top:199.8px;width:44.45px;color:#f0f0f0;font-size:5.8px;font-weight:bold">複数選択 (Alt+S)</div>
<div style="left:601.5px;top:337.5px;width:110px;height:38px;background:#ffffff;border:1px solid #c3cbe0"></div>
<div class="t j" style="left:605.0px;top:344.8px;width:36.00px;color:#333;font-size:9px">小学生用</div>
<div style="left:604.5px;top:354.0px;width:104px;height:1px;background:#dfe3ec"></div>
<svg style="left:679px;top:342.0px" width="8" height="8" viewBox="0 0 8 8"><path d="M0.5 1l0.8 0.8 1.2-1.3M0.5 4l0.8 0.8 1.2-1.3M0.5 7l0.8 0.8 1.2-1.3" stroke="#5aa84a" stroke-width="0.7" fill="none"/><path d="M3.5 1h4.5M3.5 4h4.5M3.5 7h4.5" stroke="#555" stroke-width="0.8"/></svg>
<svg style="left:696px;top:342px" width="10" height="10" viewBox="0 0 10 10"><path d="M0.5 1.5h7l-2.7 3.2v3.3l-1.6-1V4.7z" fill="#c8c8c8" stroke="#999" stroke-width="0.5"/><path d="M5.5 5.5l3.5 3.5M9 5.5l-3.5 3.5" stroke="#b0b0b0" stroke-width="1"/></svg>
<div style="left:607px;top:356px;width:89px;height:14.5px;background:#b5c5e6;border:1px solid #9fb2d8;border-radius:2.5px"></div>
<div class="t j" style="left:611px;top:363.5px;width:36.00px;color:#333;font-size:9px">（空白）</div>
<div style="left:698px;top:356px;width:8px;height:8px;border-radius:50%;background:#a8a8a8"></div>
<div style="left:0px;top:0px;width:1024px;height:25px;background:#424242"></div>
<div style="left:0px;top:25px;width:1024px;height:12px;background:#3f3f3f"></div>
<div style="left:0px;top:37px;width:1024px;height:1px;background:#474747"></div>
<div style="left:0px;top:38px;width:1024px;height:42px;background:#363636"></div>
<div style="left:0px;top:80px;width:1024px;height:2px;background:#1c1c1c"></div>
<svg style="left:16px;top:6.5px" width="10" height="9.5" viewBox="0 0 10 9.5"><path d="M0.8 5L5 1 9.2 5" stroke="#e6e6e6" stroke-width="1.7" fill="none" stroke-linejoin="round"/><path d="M2 4.8V9.3H4.2V6.8H5.8V9.3H8V4.8L5 2z" fill="#e6e6e6"/></svg>
<svg style="left:35px;top:7px" width="9" height="9" viewBox="0 0 9 9"><path d="M0 0.8Q0 0 0.8 0H7L9 2V8.2Q9 9 8.2 9H0.8Q0 9 0 8.2z" fill="#e6e6e6"/><rect x="1.6" y="1.5" width="5.6" height="2.6" fill="#424242"/><rect x="2.6" y="6.2" width="3.6" height="1.8" fill="#424242"/></svg>
<svg style="left:53px;top:6px" width="12" height="11" viewBox="0 0 12 11"><path d="M4.5 2L1.5 5 4.5 8" stroke="#e6e6e6" stroke-width="1.6" fill="none"/><path d="M2 5H7.5A2.8 2.8 0 0 1 7.5 10.6H5.5" stroke="#e6e6e6" stroke-width="1.6" fill="none"/></svg>
<svg style="left:67px;top:9px" width="5" height="4" viewBox="0 0 5 4"><path d="M0.5 0.5h4l-2 2.5z" fill="#e6e6e6"/></svg>
<svg style="left:78px;top:6px" width="11" height="11" viewBox="0 0 11 11"><path d="M4.4 2.4A3.9 3.9 0 1 0 8.5 4.3" stroke="#e6e6e6" stroke-width="1.6" fill="none"/><path d="M4.6 4.2V1.4H8.8" stroke="#e6e6e6" stroke-width="1.4" fill="none" stroke-linejoin="miter"/></svg>
<svg style="left:98px;top:6px" width="9" height="11" viewBox="0 0 9 11"><path d="M0.8 0.8H5.5L8.2 3.5V10.2H0.8z" stroke="#e6e6e6" stroke-width="1" fill="none"/><path d="M5.5 0.8V3.5H8.2" stroke="#e6e6e6" stroke-width="1" fill="none"/></svg>
<svg style="left:116px;top:6.5px" width="11" height="10" viewBox="0 0 11 10"><rect x="2.8" y="0.7" width="5.4" height="2.6" stroke="#e6e6e6" stroke-width="1.2" fill="none"/><rect x="0.7" y="3.2" width="9.6" height="4.6" rx="1.4" stroke="#e6e6e6" stroke-width="1.4" fill="none"/><rect x="2.8" y="6.3" width="5.4" height="3" stroke="#e6e6e6" stroke-width="1.2" fill="#424242"/></svg>
<svg style="left:137px;top:9px" width="6" height="6" viewBox="0 0 6 6"><path d="M0.5 0.5h5" stroke="#e6e6e6" stroke-width="1"/><path d="M0.5 2.2h5l-2.5 3z" fill="#e6e6e6"/></svg>
<svg style="left:487px;top:5px" width="10" height="12" viewBox="0 0 10 12"><path d="M1 0.5H6.5L9.5 3.5V11.5H1z" fill="#f2f2f2"/><rect x="0" y="3" width="6" height="6" fill="#5f9a72"/><path d="M1.5 4.5l3 3M4.5 4.5l-3 3" stroke="#fff" stroke-width="0.9"/></svg>
<div class="t" style="left:499px;top:11.8px;color:#e8e8e8;font-size:8.8px;font-weight:bold;letter-spacing:-0.1px">Social-All</div>
<div style="left:887px;top:6px;width:109px;height:11px;background:#555555;border-radius:2px"></div>
<svg style="left:891px;top:8px" width="9" height="8" viewBox="0 0 9 8"><circle cx="3.5" cy="3.5" r="2.6" stroke="#e0e0e0" stroke-width="1.1" fill="none"/><path d="M5.3 5.3L8 8" stroke="#e0e0e0" stroke-width="1.2"/></svg>
<div class="t j" style="left:902px;top:11.5px;width:48.00px;color:#9a9a9a;font-size:7.5px">シートを検索</div>
<svg style="left:1005px;top:4px" width="12" height="12" viewBox="0 0 12 12"><path d="M4 2.5a2.2 2.2 0 1 1 0.01 0z" fill="#f0f0f0"/><circle cx="4.5" cy="5" r="2.4" fill="#f0f0f0"/><path d="M0.5 12C0.5 8.5 2 7.8 4.5 7.8S8.5 8.5 8.5 12z" fill="#f0f0f0"/><path d="M6.5 0.5H11.5V4.5H9.5L8 6V4.5H6.5z" fill="#f0f0f0"/></svg>
<div style="left:7px;top:25px;width:36px;height:13px;background:#363636;border-radius:2px 2px 0 0"></div>
<div style="left:400.5px;top:25px;width:82px;height:13px;background:#5c5c5c;border-radius:3px 3px 0 0"></div>
<div style="left:484px;top:25px;width:47px;height:13px;background:#5c5c5c;border-radius:3px 3px 0 0"></div>
<div class="tc j" style="left:24.5px;top:31px;width:21.00px;color:#e6e6e6;font-size:7px;font-weight:bold">ホーム</div>
<div class="tc j" style="left:69.5px;top:31px;width:35.00px;color:#d8d8d8;font-size:7px;font-weight:bold">新しいタブ</div>
<div class="tc j" style="left:112px;top:31px;width:14.00px;color:#d8d8d8;font-size:7px;font-weight:bold">挿入</div>
<div class="tc j" style="left:143.5px;top:31px;width:14.00px;color:#d8d8d8;font-size:7px;font-weight:bold">描画</div>
<div class="tc j" style="left:196.5px;top:31px;width:57.95px;color:#d8d8d8;font-size:7px;font-weight:bold">ページ レイアウト</div>
<div class="tc j" style="left:251px;top:31px;width:14.00px;color:#d8d8d8;font-size:7px;font-weight:bold">数式</div>
<div class="tc j" style="left:285.5px;top:31px;width:21.00px;color:#d8d8d8;font-size:7px;font-weight:bold">データ</div>
<div class="tc j" style="left:321px;top:31px;width:14.00px;color:#d8d8d8;font-size:7px;font-weight:bold">校閲</div>
<div class="tc j" style="left:351.5px;top:31px;width:14.00px;color:#d8d8d8;font-size:7px;font-weight:bold">表示</div>
<div class="tc j" style="left:383px;top:31px;width:14.00px;color:#d8d8d8;font-size:7px;font-weight:bold">開発</div>
<div class="tc j" style="left:441px;top:31px;width:63.00px;color:#f0f0f0;font-size:7px;font-weight:bold">ヘッダーとフッター</div>
<div class="tc j" style="left:507px;top:31px;width:28.00px;color:#f0f0f0;font-size:7px;font-weight:bold">テーブル</div>
<svg style="left:973px;top:27px" width="12" height="9" viewBox="0 0 12 9"><circle cx="4" cy="2.5" r="2" fill="#e8e8e8"/><path d="M0.5 8.5C0.5 6 2 5.2 4 5.2S7.5 6 7.5 8.5z" fill="#e8e8e8"/><path d="M9.5 2v5M7 4.5h5" stroke="#e8e8e8" stroke-width="1.1"/></svg>
<div class="t j" style="left:986px;top:31px;width:16.00px;color:#e8e8e8;font-size:7.5px;font-weight:bold">共有</div>
<svg style="left:1007px;top:28px" width="7" height="5" viewBox="0 0 7 5"><path d="M0.8 4L3.5 1.2 6.2 4" stroke="#e8e8e8" stroke-width="1.2" fill="none"/></svg>
<svg style="left:9px;top:43px" width="15" height="18" viewBox="0 0 15 18"><rect x="0.5" y="2" width="11" height="15" rx="1" fill="#d9b26a"/><rect x="3.5" y="0.5" width="5" height="3" rx="1" fill="#9a9a9a"/><path d="M5 6H11.5L14.5 9V17.5H5z" fill="#f4f4f4"/><path d="M11.5 6V9H14.5" fill="#cfcfcf"/></svg>
<svg style="left:29px;top:52px" width="5" height="4" viewBox="0 0 5 4"><path d="M0.5 0.5h4l-2 2.5z" fill="#cfcfcf"/></svg>
<div class="tc j" style="left:18.5px;top:68.5px;width:24.00px;color:#d8d8d8;font-size:6px;font-weight:bold">ペースト</div>
<svg style="left:40px;top:41px" width="10" height="10" viewBox="0 0 10 10"><path d="M2 0.5L7 6M8 0.5L3 6" stroke="#e6e6e6" stroke-width="1"/><circle cx="2.4" cy="7.6" r="1.7" stroke="#6a8cc8" stroke-width="1" fill="none"/><circle cx="7.6" cy="7.6" r="1.7" stroke="#6a8cc8" stroke-width="1" fill="none"/></svg>
<div class="t j" style="left:53px;top:46px;width:24.00px;color:#dcdcdc;font-size:6px;font-weight:bold">切り取り</div>
<svg style="left:40px;top:54px" width="10" height="10" viewBox="0 0 10 10"><path d="M3 0.8H6.5L8.5 2.8V7.5H3z" fill="#e0e0e0"/><path d="M1 3H4.5L6.5 5V9.5H1z" fill="#f2f2f2" stroke="#2c2c2c" stroke-width="0.6"/></svg>
<div class="t j" style="left:53px;top:59.5px;width:18.00px;color:#dcdcdc;font-size:6px;font-weight:bold">コピー</div>
<svg style="left:75px;top:58px" width="5" height="4" viewBox="0 0 5 4"><path d="M0.5 0.5h4l-2 2.5z" fill="#cfcfcf"/></svg>
<svg style="left:40px;top:69px" width="10" height="8" viewBox="0 0 10 8"><path d="M6 3.2L9.2 0.3 9.8 0.9 7 4z" fill="#f0f0f0"/><path d="M0.3 6.5L4.2 2.4 7.2 5 3 8z" fill="#5b8fe0"/><path d="M4.2 2.4L6 3 7.2 5" fill="#e8e8e8"/></svg>
<div class="t j" style="left:53px;top:73px;width:12.00px;color:#dcdcdc;font-size:6px;font-weight:bold">書式</div>
<div style="left:85px;top:42px;width:1px;height:36px;background:#2b2b2b"></div>
<div style="left:91px;top:44px;width:89px;height:13px;background:#454545;border-radius:2px"></div>
<div style="left:172px;top:44px;width:1px;height:13px;background:#333"></div>
<div class="t j" style="left:94px;top:50.5px;width:35.00px;color:#dcdcdc;font-size:7px;font-weight:bold">游教科書体</div>
<svg style="left:175px;top:49px" width="5" height="4" viewBox="0 0 5 4"><path d="M0.5 0.5h4l-2 2.5z" fill="#cfcfcf"/></svg>
<div style="left:184.5px;top:44px;width:30.5px;height:13px;background:#454545;border-radius:2px"></div>
<div class="t" style="left:187px;top:50.5px;color:#dcdcdc;font-size:8px;font-weight:bold">10</div>
<div style="left:206px;top:44px;width:1px;height:13px;background:#333"></div>
<svg style="left:209px;top:49px" width="5" height="4" viewBox="0 0 5 4"><path d="M0.5 0.5h4l-2 2.5z" fill="#cfcfcf"/></svg>
<div style="left:219px;top:44px;width:34.5px;height:13px;background:#454545;border-radius:2px"></div>
<div style="left:236px;top:44px;width:1px;height:13px;background:#333"></div>
<div class="t" style="left:222px;top:50.5px;color:#dcdcdc;font-size:10px">A</div>
<svg style="left:230px;top:48.5px" width="5" height="3" viewBox="0 0 5 3"><path d="M0.5 2.5h4l-2-2z" fill="#6a9ee6"/></svg>
<div class="t" style="left:239px;top:51px;color:#dcdcdc;font-size:8px">A</div>
<svg style="left:246.5px;top:49.5px" width="5" height="3" viewBox="0 0 5 3"><path d="M0.5 0.5h4l-2 2z" fill="#6a9ee6"/></svg>
<div style="left:91px;top:62px;width:59px;height:13.5px;background:#454545;border-radius:2px"></div>
<div style="left:110px;top:62px;width:1px;height:13.5px;background:#333"></div>
<div style="left:126px;top:62px;width:1px;height:13.5px;background:#333"></div>
<div style="left:143px;top:62px;width:1px;height:13.5px;background:#333"></div>
<div class="tc" style="left:100.5px;top:69px;color:#dcdcdc;font-size:8px;font-weight:bold">B</div>
<div class="tc" style="left:118px;top:69px;color:#dcdcdc;font-size:8.5px;font-style:italic;font-family:Liberation Serif">I</div>
<div class="tc" style="left:134.5px;top:68.5px;color:#dcdcdc;font-size:8px;text-decoration:underline">U</div>
<svg style="left:144.5px;top:68px" width="5" height="4" viewBox="0 0 5 4"><path d="M0.5 0.5h4l-2 2.5z" fill="#cfcfcf"/></svg>
<div style="left:154px;top:62px;width:23px;height:13.5px;background:#454545;border-radius:2px"></div>
<svg style="left:157px;top:64px" width="10" height="9" viewBox="0 0 10 9"><path d="M0.5 0.5h9v8h-9zM5 0.5v8M0.5 4.5h9" stroke="#6e6e6e" stroke-width="0.8" fill="none"/><path d="M0 8.5h10" stroke="#bdbdbd" stroke-width="1"/></svg>
<svg style="left:171px;top:68px" width="5" height="4" viewBox="0 0 5 4"><path d="M0.5 0.5h4l-2 2.5z" fill="#cfcfcf"/></svg>
<div style="left:181px;top:62px;width:46px;height:13.5px;background:#454545;border-radius:2px"></div>
<svg style="left:183px;top:62px" width="11" height="12" viewBox="0 0 11 12"><path d="M3 1L7.5 5 5 8 1 4.5z" fill="#eaeaea"/><path d="M4 2.5L7 5.5" stroke="#6a8cc8" stroke-width="1.3"/><rect x="1" y="9.5" width="10.5" height="2.5" fill="#f3e33a"/></svg>
<svg style="left:197px;top:68px" width="5" height="4" viewBox="0 0 5 4"><path d="M0.5 0.5h4l-2 2.5z" fill="#cfcfcf"/></svg>
<div class="tc" style="left:210px;top:66.5px;color:#dcdcdc;font-size:8.5px">A</div>
<div style="left:205px;top:71.5px;width:11px;height:2.5px;background:#e03a2f"></div>
<svg style="left:220px;top:68px" width="5" height="4" viewBox="0 0 5 4"><path d="M0.5 0.5h4l-2 2.5z" fill="#cfcfcf"/></svg>
<div style="left:231px;top:62px;width:22.5px;height:13.5px;background:#454545;border-radius:2px"></div>
<div class="t" style="left:233px;top:65.5px;color:#bbbbbb;font-size:4.5px">abc</div>
<div class="tc" style="left:241.5px;top:71px;color:#6a9ee6;font-size:8px;font-weight:bold">A</div>
<svg style="left:248px;top:68px" width="5" height="4" viewBox="0 0 5 4"><path d="M0.5 0.5h4l-2 2.5z" fill="#cfcfcf"/></svg>
<div style="left:260px;top:42px;width:1px;height:36px;background:#2b2b2b"></div>
<div style="left:266px;top:44px;width:51px;height:13px;background:#454545;border-radius:2px"></div>
<div style="left:283px;top:44px;width:17px;height:13px;background:#232323"></div>
<svg style="left:270px;top:47px" width="9" height="7" viewBox="0 0 9 7"><path d="M0.5 0.5h8M0.5 2.2h8" stroke="#cfcfcf" stroke-width="0.9"/></svg>
<svg style="left:287px;top:47px" width="9" height="7" viewBox="0 0 9 7"><path d="M0.5 2.5h8M0.5 4.2h8" stroke="#e0e0e0" stroke-width="0.9"/></svg>
<svg style="left:304px;top:47px" width="9" height="7" viewBox="0 0 9 7"><path d="M0.5 4.5h8M0.5 6.2h8" stroke="#cfcfcf" stroke-width="0.9"/></svg>
<div style="left:321.5px;top:44px;width:21.5px;height:13px;background:#454545;border-radius:2px"></div>
<svg style="left:324px;top:44.5px" width="12" height="12" viewBox="0 0 12 12"><g transform="rotate(-50 6 6)"><text x="1" y="8" font-size="7.5" font-family="Liberation Sans" font-weight="bold" fill="#d8d8d8">ab</text><path d="M0.5 9.6h10" stroke="#6a9ee6" stroke-width="0.9"/></g></svg>
<svg style="left:336px;top:49px" width="5" height="4" viewBox="0 0 5 4"><path d="M0.5 0.5h4l-2 2.5z" fill="#cfcfcf"/></svg>
<div style="left:266px;top:62px;width:51px;height:13.5px;background:#454545;border-radius:2px"></div>
<div style="left:266px;top:62px;width:17px;height:13.5px;background:#232323;border-radius:2px 0 0 2px"></div>
<svg style="left:270px;top:65px" width="9" height="8" viewBox="0 0 9 8"><path d="M0.5 0.5h8M0.5 2.5h5M0.5 4.5h8M0.5 6.5h5" stroke="#dcdcdc" stroke-width="0.8"/></svg>
<svg style="left:287px;top:65px" width="9" height="8" viewBox="0 0 9 8"><path d="M0.5 0.5h8M2 2.5h5M0.5 4.5h8M2 6.5h5" stroke="#cfcfcf" stroke-width="0.8"/></svg>
<svg style="left:304px;top:65px" width="9" height="8" viewBox="0 0 9 8"><path d="M0.5 0.5h8M3.5 2.5h5M0.5 4.5h8M3.5 6.5h5" stroke="#cfcfcf" stroke-width="0.8"/></svg>
<div style="left:321.5px;top:62px;width:34.5px;height:13.5px;background:#454545;border-radius:2px"></div>
<div style="left:338.5px;top:62px;width:1px;height:13.5px;background:#333"></div>
<svg style="left:324px;top:65px" width="12" height="8" viewBox="0 0 12 8"><path d="M0.5 4l3-2.5v5z" fill="#5a9ae8"/><path d="M4 4h3M6 0.5h5M7.5 2.5h3.5M7.5 4.5h3.5M6 6.5h5" stroke="#cfcfcf" stroke-width="0.8"/></svg>
<svg style="left:341px;top:65px" width="12" height="8" viewBox="0 0 12 8"><path d="M4 4l-3-2.5v5z" fill="#5a9ae8"/><path d="M0 4h3M6 0.5h5M7.5 2.5h3.5M7.5 4.5h3.5M6 6.5h5" stroke="#cfcfcf" stroke-width="0.8"/></svg>
<div style="left:362.5px;top:42px;width:1px;height:36px;background:#2b2b2b"></div>
<div style="left:367px;top:45.5px;width:96.5px;height:12.5px;background:#1f1f1f;border-radius:2px"></div>
<div style="left:457px;top:45.5px;width:6.5px;height:12.5px;background:#2a2a2a"></div>
<svg style="left:370px;top:47px" width="10" height="9" viewBox="0 0 10 9"><rect x="0.5" y="0.5" width="6" height="8" fill="#f0f0f0"/><path d="M2 2h3.5M2 4h3.5" stroke="#888" stroke-width="0.6"/><path d="M6 3.5h1.5a1.8 1.8 0 0 1 0 3.6H5.5" stroke="#5a9ae8" stroke-width="1" fill="none"/></svg>
<div class="t j" style="left:384px;top:51.5px;width:72.00px;color:#f0f0f0;font-size:5.9px;font-weight:bold">折り返して全体を表示する</div>
<svg style="left:458px;top:50px" width="5" height="4" viewBox="0 0 5 4"><path d="M0.5 0.5h4l-2 2.5z" fill="#cfcfcf"/></svg>
<div style="left:372px;top:64px;width:9px;height:9px;background:#6a6a6a;border-radius:1px"></div>
<div class="t j" style="left:385px;top:68.5px;width:66.00px;color:#777;font-size:5.8px;font-weight:bold">セルを結合して中央揃え</div>
<svg style="left:455px;top:67px" width="5" height="4" viewBox="0 0 5 4"><path d="M0.5 0.5h4l-2 2.5z" fill="#666"/></svg>
<div style="left:470px;top:42px;width:1px;height:36px;background:#2b2b2b"></div>
<svg style="left:478px;top:45px" width="17" height="15" viewBox="0 0 17 15"><rect x="0" y="0" width="17" height="15" fill="#6a6a6a"/><path d="M0 5h17M0 10h17M8.5 0v15" stroke="#4a4a4a" stroke-width="1"/></svg>
<svg style="left:506px;top:45px" width="17" height="15" viewBox="0 0 17 15"><rect x="0" y="0" width="17" height="15" fill="#6a6a6a"/><path d="M0 5h17M0 10h17M8.5 0v15" stroke="#4a4a4a" stroke-width="1"/></svg>
<div class="tc j" style="left:486.5px;top:69px;width:18.00px;color:#888;font-size:6px;font-weight:bold">セルの</div>
<div class="tc j" style="left:486.5px;top:76px;width:12.00px;color:#888;font-size:6px;font-weight:bold">結合</div>
<div class="tc j" style="left:514px;top:69px;width:24.00px;color:#888;font-size:6px;font-weight:bold">セル結合</div>
<div class="tc j" style="left:514px;top:76px;width:18.00px;color:#888;font-size:6px;font-weight:bold">の解除</div>
<div style="left:531px;top:42px;width:1px;height:36px;background:#2b2b2b"></div>
<div style="left:537px;top:44px;width:95.5px;height:13px;background:#454545;border-radius:2px"></div>
<div style="left:624px;top:44px;width:1px;height:13px;background:#333"></div>
<div class="t j" style="left:540px;top:50.5px;width:14.00px;color:#dcdcdc;font-size:7px;font-weight:bold">標準</div>
<svg style="left:626.5px;top:49px" width="5" height="4" viewBox="0 0 5 4"><path d="M0.5 0.5h4l-2 2.5z" fill="#cfcfcf"/></svg>
<div style="left:537px;top:62px;width:57px;height:13.5px;background:#454545;border-radius:2px"></div>
<svg style="left:539px;top:64px" width="11" height="9" viewBox="0 0 11 9"><ellipse cx="4" cy="7" rx="3.5" ry="1.6" fill="#c89a2a"/><ellipse cx="4" cy="5" rx="3.5" ry="1.6" fill="#e2b640"/><ellipse cx="7" cy="3.5" rx="3.5" ry="1.6" fill="#c89a2a"/><ellipse cx="7" cy="2" rx="3.5" ry="1.6" fill="#f0c850"/></svg>
<svg style="left:553px;top:68px" width="5" height="4" viewBox="0 0 5 4"><path d="M0.5 0.5h4l-2 2.5z" fill="#cfcfcf"/></svg>
<div class="tc" style="left:568px;top:69px;color:#e0e0e0;font-size:10px">%</div>
<div class="tc" style="left:585px;top:69px;color:#bdbdbd;font-size:5.5px">000</div>
<div style="left:598px;top:62px;width:34.5px;height:13.5px;background:#454545;border-radius:2px"></div>
<div style="left:615px;top:62px;width:1px;height:13.5px;background:#333"></div>
<div class="t" style="left:604px;top:66px;color:#cfcfcf;font-size:4.5px">.0</div>
<div class="t" style="left:602px;top:71.5px;color:#cfcfcf;font-size:4.5px">.00</div>
<svg style="left:599px;top:64.5px" width="5" height="4" viewBox="0 0 5 4"><path d="M0.5 2L2.5 0.5 4.5 2 2.5 3.5z" fill="#5a9ae8"/></svg>
<div class="t" style="left:620px;top:66px;color:#cfcfcf;font-size:4.5px">.00</div>
<div class="t" style="left:622px;top:71.5px;color:#cfcfcf;font-size:4.5px">.0</div>
<svg style="left:617px;top:70px" width="5" height="4" viewBox="0 0 5 4"><path d="M0.5 2L2.5 0.5 4.5 2 2.5 3.5z" fill="#5a9ae8"/></svg>
<div style="left:638.5px;top:42px;width:1px;height:36px;background:#2b2b2b"></div>
<svg style="left:646px;top:45px" width="19" height="15" viewBox="0 0 19 15"><rect x="0" y="0" width="14" height="15" fill="#f2f2f2"/><path d="M0 4h14M0 8h14M0 12h14M4 0v15M9 0v15" stroke="#c8c8c8" stroke-width="0.5"/><rect x="4" y="0" width="5" height="4" fill="#e06060"/><rect x="4" y="4" width="5" height="4" fill="#5b8fe0"/><rect x="4" y="8" width="5" height="4" fill="#e06060"/><rect x="8.5" y="8.5" width="9" height="7" fill="#f8f8f8" stroke="#666" stroke-width="0.6"/><text x="10" y="14.5" font-size="6.5" font-family="Liberation Sans" fill="#222">≠</text></svg>
<svg style="left:666px;top:49px" width="5" height="4" viewBox="0 0 5 4"><path d="M0.5 0.5h4l-2 2.5z" fill="#cfcfcf"/></svg>
<div class="tc j" style="left:655px;top:68.5px;width:24.00px;color:#dcdcdc;font-size:6px;font-weight:bold">条件付き</div>
<div class="tc j" style="left:655px;top:76px;width:12.00px;color:#dcdcdc;font-size:6px;font-weight:bold">書式</div>
<svg style="left:681px;top:45px" width="19" height="15" viewBox="0 0 19 15"><rect x="0" y="0" width="16" height="13" fill="#dfe8f5"/><path d="M0 4h16M0 8.5h16M5 0v13M10.5 0v13" stroke="#9fb6d6" stroke-width="0.7"/><path d="M7 13L15 3" stroke="#d9b26a" stroke-width="2"/><path d="M4 14.5L7 11.5 9 13z" fill="#3a6cc0"/></svg>
<svg style="left:701px;top:49px" width="5" height="4" viewBox="0 0 5 4"><path d="M0.5 0.5h4l-2 2.5z" fill="#cfcfcf"/></svg>
<div class="tc j" style="left:693px;top:68.5px;width:30.00px;color:#dcdcdc;font-size:6px;font-weight:bold">テーブルと</div>
<div class="tc j" style="left:693px;top:76px;width:36.00px;color:#dcdcdc;font-size:6px;font-weight:bold">して書式設定</div>
<svg style="left:716px;top:45px" width="19" height="15" viewBox="0 0 19 15"><rect x="0" y="0" width="16" height="13" fill="#f2f2f2" stroke="#9fb6d6" stroke-width="0.8"/><path d="M7 13L15 3" stroke="#d9b26a" stroke-width="2"/><path d="M4 14.5L7 11.5 9 13z" fill="#3a6cc0"/></svg>
<svg style="left:737px;top:49px" width="5" height="4" viewBox="0 0 5 4"><path d="M0.5 0.5h4l-2 2.5z" fill="#cfcfcf"/></svg>
<div class="tc j" style="left:729px;top:68.5px;width:18.00px;color:#dcdcdc;font-size:6px;font-weight:bold">セルの</div>
<div class="tc j" style="left:729px;top:76px;width:24.00px;color:#dcdcdc;font-size:6px;font-weight:bold">スタイル</div>
<div style="left:748px;top:42px;width:1px;height:36px;background:#2b2b2b"></div>
<svg style="left:758px;top:45px" width="20" height="15" viewBox="0 0 20 15"><rect x="7" y="0" width="10" height="15" fill="#6e6e6e"/><path d="M7 5h10M7 10h10M12 0v15" stroke="#4e4e4e" stroke-width="0.8"/><rect x="7" y="5" width="10" height="5" fill="#4f8a43"/><path d="M0.5 7.5L4.5 4v2.2h3v2.6h-3V11z" fill="#4f8a43"/></svg>
<svg style="left:778px;top:49px" width="5" height="4" viewBox="0 0 5 4"><path d="M0.5 0.5h4l-2 2.5z" fill="#cfcfcf"/></svg>
<div class="tc j" style="left:768px;top:68.5px;width:12.00px;color:#dcdcdc;font-size:6px;font-weight:bold">挿入</div>
<svg style="left:786px;top:45px" width="21" height="15" viewBox="0 0 21 15"><rect x="3" y="0" width="10" height="15" fill="#f2f2f2"/><rect x="0" y="5" width="16" height="5" fill="#d94444"/><path d="M3 5V0M8 0v5M8 10v5" stroke="#aaa" stroke-width="0.5"/><path d="M15.5 4.5l4 5M19.5 4.5l-4 5" stroke="#e04444" stroke-width="1.3"/></svg>
<svg style="left:809px;top:49px" width="5" height="4" viewBox="0 0 5 4"><path d="M0.5 0.5h4l-2 2.5z" fill="#cfcfcf"/></svg>
<div class="tc j" style="left:800px;top:68.5px;width:12.00px;color:#dcdcdc;font-size:6px;font-weight:bold">削除</div>
<svg style="left:818px;top:44px" width="18" height="16" viewBox="0 0 18 16"><path d="M1 1.5h16M1 0v3M17 0v3" stroke="#6aa0e6" stroke-width="0.9"/><path d="M4 1.5L6 0.5V2.5zM14 1.5L12 0.5V2.5z" fill="#6aa0e6"/><rect x="0" y="4" width="18" height="12" fill="#f2f2f2"/><path d="M0 8h18M0 12h18M6 4v12M12 4v12" stroke="#bbb" stroke-width="0.5"/><rect x="6" y="7" width="6" height="6" fill="#5b8fe0"/></svg>
<svg style="left:838px;top:49px" width="5" height="4" viewBox="0 0 5 4"><path d="M0.5 0.5h4l-2 2.5z" fill="#cfcfcf"/></svg>
<div class="tc j" style="left:830px;top:68.5px;width:12.00px;color:#dcdcdc;font-size:6px;font-weight:bold">書式</div>
<div style="left:850.5px;top:42px;width:1px;height:36px;background:#2b2b2b"></div>
<svg style="left:859.5px;top:40.5px" width="10" height="11" viewBox="0 0 10 11"><path d="M9.2 1H1L5.4 5.5 1 10H9.2" stroke="#d8d8d8" stroke-width="1.3" fill="none" stroke-linejoin="miter"/></svg>
<div class="t j" style="left:872px;top:46px;width:33.00px;color:#dcdcdc;font-size:6px;font-weight:bold">オート SUM</div>
<svg style="left:909px;top:44.5px" width="5" height="4" viewBox="0 0 5 4"><path d="M0.5 0.5h4l-2 2.5z" fill="#cfcfcf"/></svg>
<svg style="left:860px;top:55px" width="8" height="9" viewBox="0 0 8 9"><rect x="0" y="0" width="8" height="9" fill="#f2f2f2"/><path d="M4 2L6 5.3A2 2 0 0 1 2 5.3z" fill="#4a82d8"/></svg>
<div class="t j" style="left:872px;top:59.5px;width:18.00px;color:#dcdcdc;font-size:6.2px;font-weight:bold">フィル</div>
<svg style="left:891px;top:57.5px" width="5" height="4" viewBox="0 0 5 4"><path d="M0.5 0.5h4l-2 2.5z" fill="#cfcfcf"/></svg>
<svg style="left:859px;top:69px" width="11" height="8" viewBox="0 0 11 8"><path d="M0.5 5.5L5 1.5 10.5 1.5 6 6z" fill="#f29ab0"/><path d="M0.5 5.5L6 6 6 7.5 0.5 7z" fill="#d06a88"/></svg>
<div class="t j" style="left:872px;top:73px;width:18.00px;color:#dcdcdc;font-size:6.2px;font-weight:bold">クリア</div>
<svg style="left:891px;top:71px" width="5" height="4" viewBox="0 0 5 4"><path d="M0.5 0.5h4l-2 2.5z" fill="#cfcfcf"/></svg>
<svg style="left:921px;top:43px" width="24" height="17" viewBox="0 0 24 17"><text x="0" y="8" font-size="8.5" font-family="Liberation Sans" fill="#5a9ae8">A</text><text x="0.5" y="16" font-size="8.5" font-family="Liberation Sans" fill="#bdbdbd">Z</text><path d="M7.5 4h13l-5 5.5v6.5h-3v-6.5z" fill="#c4c4c4"/></svg>
<svg style="left:941.5px;top:51px" width="5" height="4" viewBox="0 0 5 4"><path d="M0.5 0.5h4l-2 2.5z" fill="#cfcfcf"/></svg>
<div class="tc j" style="left:933px;top:68.5px;width:30.00px;color:#dcdcdc;font-size:6px;font-weight:bold">並べ替えと</div>
<div class="tc j" style="left:933px;top:76px;width:30.00px;color:#dcdcdc;font-size:6px;font-weight:bold">フィルター</div>
<svg style="left:954px;top:43px" width="19" height="18" viewBox="0 0 19 18"><circle cx="11.5" cy="6.5" r="5.5" fill="#ffffff" stroke="#6aa0e6" stroke-width="1.8"/><path d="M7.5 10.5L1 17" stroke="#4a7cc8" stroke-width="2.4" stroke-linecap="round"/></svg>
<svg style="left:974px;top:49px" width="5" height="4" viewBox="0 0 5 4"><path d="M0.5 0.5h4l-2 2.5z" fill="#cfcfcf"/></svg>
<div class="tc j" style="left:964px;top:68.5px;width:18.00px;color:#dcdcdc;font-size:6px;font-weight:bold">検索と</div>
<div class="tc j" style="left:964px;top:76px;width:12.00px;color:#dcdcdc;font-size:6px;font-weight:bold">選択</div>
<div style="left:0px;top:82px;width:1024px;height:18px;background:#fbf4e2"></div>
<svg style="left:5px;top:86px" width="10" height="10" viewBox="0 0 10 10"><circle cx="5" cy="5" r="4.8" fill="#8a7a62"/><path d="M3 3l4 4M7 3l-4 4" stroke="#fbf4e2" stroke-width="1.2"/></svg>
<div class="t" style="left:19.5px;top:91px;color:#333;font-size:7.6px;font-weight:bold">Office Update</div>
<div class="t j" style="left:74px;top:91px;width:326.12px;color:#333;font-size:6.5px;letter-spacing:-0.3px">セキュリティ更新プログラム、修正、改善を最新の状態に保つには、[更新プログラムの確認] を選択します。</div>
<div style="left:926.5px;top:85px;width:92px;height:11px;background:#f8f1df;border:1px solid #cfc7b4;border-radius:3px"></div>
<div class="tc j" style="left:972.5px;top:91px;width:84.00px;color:#333;font-size:6.8px;font-weight:bold">更新プログラムのチェック</div>
<div style="left:0px;top:100px;width:1024px;height:17px;background:#1f1f1f"></div>
<div style="left:109px;top:101px;width:905px;height:14px;background:#303030"></div>
<div style="left:1014px;top:101px;width:10px;height:14px;background:#1f1f1f"></div>
<svg style="left:1016px;top:106px" width="6" height="5" viewBox="0 0 6 5"><path d="M0.5 0.5h5l-2.5 3.5z" fill="#d0d0d0"/></svg>
<div class="t" style="left:6px;top:108.5px;color:#dcdcdc;font-size:8px">B22</div>
<svg style="left:43px;top:103px" width="6" height="11" viewBox="0 0 6 11"><path d="M0.5 4L3 1 5.5 4z" fill="#cfcfcf"/><path d="M0.5 7L3 10 5.5 7z" fill="#cfcfcf"/></svg>
<div style="left:52px;top:101px;width:1px;height:14px;background:#2e2e2e"></div>
<svg style="left:61px;top:105px" width="7" height="7" viewBox="0 0 7 7"><path d="M0.5 0.5l6 6M6.5 0.5l-6 6" stroke="#5a5a5a" stroke-width="1.5"/></svg>
<svg style="left:78px;top:105px" width="8" height="7" viewBox="0 0 8 7"><path d="M0.5 3.5L3 6 7.5 0.5" stroke="#5a5a5a" stroke-width="1.5" fill="none"/></svg>
<div class="t" style="left:95.5px;top:108.5px;color:#707070;font-size:11px;font-family:Liberation Serif"><i>fx</i></div>
<div class="t j" style="left:113px;top:108.5px;width:423.64px;color:#f0f0f0;font-size:8.6px;font-weight:bold;letter-spacing:-0.2px">赤道と平行な線を（<b class="bl" style="width:42px"></b>）という。中心からの角度は南北９０°ずつである。高緯度ほど気温が低い。</div>
<div style="left:0px;top:117px;width:1024px;height:1.5px;background:#c4c4c4"></div>
<div style="left:0px;top:118px;width:1024px;height:16px;background:#151515"></div>
<div style="left:49px;top:118px;width:344.5px;height:16px;background:#5a5a5a"></div>
<div style="left:16px;top:118px;width:1px;height:16px;background:#3c3c3c"></div>
<div style="left:48px;top:118px;width:1px;height:16px;background:#3c3c3c"></div>
<div style="left:393px;top:118px;width:1px;height:16px;background:#3c3c3c"></div>
<div style="left:466px;top:118px;width:1px;height:16px;background:#3c3c3c"></div>
<div style="left:496px;top:118px;width:1px;height:16px;background:#3c3c3c"></div>
<div style="left:526px;top:118px;width:1px;height:16px;background:#3c3c3c"></div>
<div style="left:557px;top:118px;width:1px;height:16px;background:#3c3c3c"></div>
<div style="left:594px;top:118px;width:1px;height:16px;background:#3c3c3c"></div>
<div style="left:620px;top:118px;width:1px;height:16px;background:#3c3c3c"></div>
<div style="left:646px;top:118px;width:1px;height:16px;background:#3c3c3c"></div>
<div style="left:673px;top:118px;width:1px;height:16px;background:#3c3c3c"></div>
<div style="left:699px;top:118px;width:1px;height:16px;background:#3c3c3c"></div>
<div style="left:725px;top:118px;width:1px;height:16px;background:#3c3c3c"></div>
<div style="left:751px;top:118px;width:1px;height:16px;background:#3c3c3c"></div>
<div style="left:777px;top:118px;width:1px;height:16px;background:#3c3c3c"></div>
<div style="left:804px;top:118px;width:1px;height:16px;background:#3c3c3c"></div>
<div style="left:830px;top:118px;width:1px;height:16px;background:#3c3c3c"></div>
<div style="left:929px;top:118px;width:1px;height:16px;background:#3c3c3c"></div>
<div style="left:17px;top:118px;width:1px;height:16px;background:#9a9a9a"></div>
<svg style="left:4px;top:120px" width="12" height="13" viewBox="0 0 12 13"><path d="M12 0.5V13H0.5z" fill="#5a5a5a"/></svg>
<div class="tc" style="left:33.0px;top:126px;color:#e8e8e8;font-size:9px">A</div>
<div class="tc" style="left:221.25px;top:126px;color:#e8e8e8;font-size:9px">B</div>
<div class="tc" style="left:429.75px;top:126px;color:#e8e8e8;font-size:9px">C</div>
<div class="tc" style="left:481.25px;top:126px;color:#e8e8e8;font-size:9px">D</div>
<div class="tc" style="left:511.75px;top:126px;color:#e8e8e8;font-size:9px">E</div>
<div class="tc" style="left:542.25px;top:126px;color:#e8e8e8;font-size:9px">F</div>
<div class="tc" style="left:576.0px;top:126px;color:#e8e8e8;font-size:9px">G</div>
<div class="tc" style="left:607.6px;top:126px;color:#e8e8e8;font-size:9px">H</div>
<div class="tc" style="left:633.8px;top:126px;color:#e8e8e8;font-size:9px">I</div>
<div class="tc" style="left:660.0px;top:126px;color:#e8e8e8;font-size:9px">J</div>
<div class="tc" style="left:686.2px;top:126px;color:#e8e8e8;font-size:9px">K</div>
<div class="tc" style="left:712.4px;top:126px;color:#e8e8e8;font-size:9px">L</div>
<div class="tc" style="left:738.6px;top:126px;color:#e8e8e8;font-size:9px">M</div>
<div class="tc" style="left:764.8px;top:126px;color:#e8e8e8;font-size:9px">N</div>
<div class="tc" style="left:791.0px;top:126px;color:#e8e8e8;font-size:9px">O</div>
<div class="tc" style="left:817.2px;top:126px;color:#e8e8e8;font-size:9px">P</div>
<div class="tc" style="left:880.0px;top:126px;color:#e8e8e8;font-size:9px">Q</div>
<div class="tc" style="left:976.85px;top:126px;color:#e8e8e8;font-size:9px">R</div>
<div style="left:0px;top:133px;width:1024px;height:1px;background:#262626"></div>
<div style="left:0px;top:610px;width:1024px;height:15px;background:#2e2e2e"></div>
<div style="left:37px;top:610px;width:370px;height:16px;background:#1c1c1c"></div>
<svg style="left:10px;top:614px" width="5" height="8" viewBox="0 0 5 8"><path d="M4.5 0.5v7L0.5 4z" fill="#5a5a5a"/></svg>
<svg style="left:24px;top:614px" width="5" height="8" viewBox="0 0 5 8"><path d="M0.5 0.5v7L4.5 4z" fill="#5a5a5a"/></svg>
<div style="left:37px;top:612px;width:1px;height:12px;background:#3a3a3a"></div>
<div style="left:87px;top:612px;width:1px;height:12px;background:#3a3a3a"></div>
<div style="left:143px;top:612px;width:1px;height:12px;background:#3a3a3a"></div>
<div style="left:191px;top:612px;width:1px;height:12px;background:#3a3a3a"></div>
<div style="left:239px;top:612px;width:1px;height:12px;background:#3a3a3a"></div>
<div style="left:287px;top:612px;width:1px;height:12px;background:#3a3a3a"></div>
<div style="left:336px;top:612px;width:1px;height:12px;background:#3a3a3a"></div>
<div style="left:384px;top:612px;width:1px;height:12px;background:#3a3a3a"></div>
<div style="left:407px;top:612px;width:1px;height:12px;background:#3a3a3a"></div>
<div style="left:143px;top:610px;width:48px;height:13.5px;background:#ffffff"></div>
<div class="tc j" style="left:62px;top:617.5px;width:32.00px;color:#8a8a8a;font-size:7.5px">時代判別</div>
<div class="tc j" style="left:120px;top:617.5px;width:24.00px;color:#9a9a9a;font-size:7.5px">使い方</div>
<div class="tc j" style="left:167px;top:617.5px;width:16.00px;color:#2e7d4f;font-size:7.5px">地理</div>
<div class="tc j" style="left:215px;top:617.5px;width:16.00px;color:#8a8a8a;font-size:7.5px">歴史</div>
<div class="tc j" style="left:263px;top:617.5px;width:16.00px;color:#8a8a8a;font-size:7.5px">公民</div>
<div class="tc j" style="left:311.5px;top:617.5px;width:16.00px;color:#8a8a8a;font-size:7.5px">全部</div>
<div class="tc" style="left:360px;top:617.5px;color:#8a8a8a;font-size:7.5px">Sheet1</div>
<svg style="left:99px;top:613px" width="7" height="8" viewBox="0 0 7 8"><rect x="0.5" y="3.5" width="6" height="4.5" rx="0.5" fill="#bdbdbd"/><path d="M1.8 3.8V2.5a1.7 1.7 0 0 1 3.4 0v1.3" stroke="#bdbdbd" stroke-width="1" fill="none"/></svg>
<div style="left:384px;top:610px;width:23px;height:16px;background:#2e2e2e"></div>
<svg style="left:391px;top:614px" width="9" height="9" viewBox="0 0 9 9"><path d="M4.5 0.5v8M0.5 4.5h8" stroke="#e8e8e8" stroke-width="1.6"/></svg>
<div style="left:0px;top:625px;width:1024px;height:1px;background:#262626"></div>
<div style="left:0px;top:626px;width:1024px;height:14px;background:#3c3c3c"></div>
<div class="t j" style="left:14px;top:633px;width:28.00px;color:#cfcfcf;font-size:6.8px">準備完了</div>
<div class="t j" style="left:54px;top:633px;width:122.58px;color:#cfcfcf;font-size:6.8px">528 レコード中 42 個が見つかりました</div>
<svg style="left:189px;top:628px" width="10" height="10" viewBox="0 0 10 10"><path d="M1.5 1.5h7M1.5 8.5h7M2.5 1.5v7M7.5 1.5v7" stroke="#dcdcdc" stroke-width="1"/></svg>
<svg style="left:209px;top:627px" width="10" height="11" viewBox="0 0 10 11"><path d="M5 0.5L6.2 3.5H9.5L6.8 5.5 7.8 9 5 7 2.2 9 3.2 5.5 0.5 3.5H3.8z" stroke="#dcdcdc" stroke-width="0.9" fill="none"/></svg>
<div class="t j" style="left:222px;top:633px;width:108.78px;color:#dcdcdc;font-size:6.8px">アクセシビリティ: 検討が必要です</div>
<div style="left:830px;top:626px;width:22px;height:14px;background:#4a4a4a"></div>
<svg style="left:836px;top:629px" width="9" height="9" viewBox="0 0 9 9"><path d="M0.5 0.5h8v8h-8zM0.5 3.2h8M0.5 5.8h8M3.2 0.5v8M5.8 0.5v8" stroke="#dcdcdc" stroke-width="0.8" fill="none"/></svg>
<svg style="left:858px;top:629px" width="9" height="9" viewBox="0 0 9 9"><path d="M0.5 0.5h8v8h-8zM3 0.5v8M6 0.5v8" stroke="#cfcfcf" stroke-width="0.8" fill="none"/></svg>
<svg style="left:880px;top:629px" width="9" height="9" viewBox="0 0 9 9"><path d="M0.5 0.5h8v8h-8zM0.5 5h4.5V0.5" stroke="#cfcfcf" stroke-width="0.8" fill="none"/></svg>
<div style="left:900px;top:632px;width:5px;height:1.5px;background:#e0e0e0"></div>
<div style="left:910px;top:632px;width:60px;height:2px;background:#7a7a7a;border-radius:1px"></div>
<div style="left:937px;top:628px;width:10px;height:10px;border-radius:50%;background:#cfcfcf"></div>
<svg style="left:974px;top:629px" width="8" height="8" viewBox="0 0 8 8"><path d="M4 0.5v7M0.5 4h7" stroke="#e0e0e0" stroke-width="1.5"/></svg>
<div class="t" style="left:990px;top:633px;color:#cfcfcf;font-size:7px">125%</div></body></html>
